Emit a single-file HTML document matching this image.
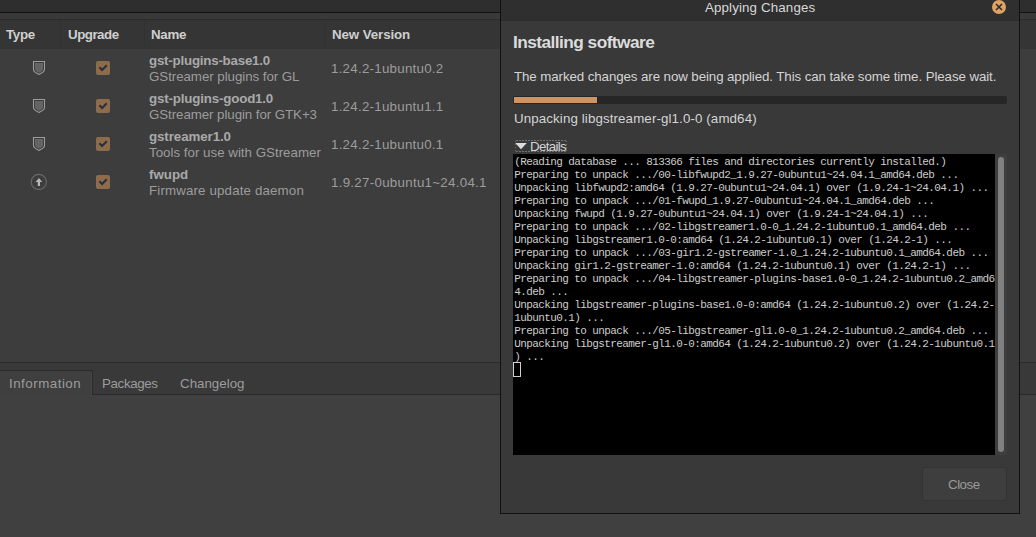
<!DOCTYPE html>
<html><head><meta charset="utf-8">
<style>
html,body{margin:0;padding:0;}
body{width:1036px;height:537px;overflow:hidden;position:relative;background:#404040;font-family:"Liberation Sans",sans-serif;font-size:13.33px;}
.a{position:absolute;}
.t{position:absolute;white-space:nowrap;line-height:1;}
.hd{font-weight:bold;color:#cfcfcf;}
.nm{font-weight:bold;color:#a9a9a9;}
.ds{color:#9c9c9c;}
.vr{color:#9c9c9c;}
.term{position:absolute;left:513px;top:154px;width:482px;height:301px;background:#000;}
.tl{position:absolute;left:1.3px;font-family:"Liberation Mono",monospace;font-size:11px;letter-spacing:-0.6px;color:#cdcdcd;white-space:pre;line-height:13px;}
</style></head><body>
<!-- main window bands -->
<div class="a" style="left:0;top:0;width:1036px;height:12px;background:#2e2e2e"></div>
<div class="a" style="left:0;top:12px;width:1036px;height:1px;background:#121212"></div>
<div class="a" style="left:0;top:13px;width:1036px;height:6px;background:#393939"></div>
<div class="a" style="left:0;top:19px;width:1036px;height:1px;background:#2b2b2b"></div>
<div class="a" style="left:0;top:20px;width:1036px;height:29px;background:#353535"></div>
<div class="a" style="left:60px;top:20px;width:1px;height:29px;background:#313131"></div>
<div class="a" style="left:144px;top:20px;width:1px;height:29px;background:#313131"></div>
<div class="a" style="left:325px;top:20px;width:1px;height:29px;background:#313131"></div>
<div class="a" style="left:0;top:49px;width:1036px;height:313px;background:#3d3d3d"></div>
<div class="a" style="left:0;top:362px;width:1036px;height:1px;background:#2a2a2a"></div>
<div class="a" style="left:0;top:363px;width:1036px;height:31px;background:#393939"></div>
<div class="a" style="left:0;top:394px;width:1036px;height:1px;background:#2a2a2a"></div>
<div class="a" style="left:0;top:395px;width:1036px;height:142px;background:#404040"></div>
<!-- selected tab -->
<div class="a" style="left:-1px;top:370px;width:94px;height:25px;background:#3f3f3f;border-top:1px solid #2a2a2a;border-right:1px solid #2a2a2a;border-top-right-radius:2px;box-sizing:border-box;box-shadow:inset -1px 0 0 #444"></div>

<!-- header -->
<div class="t hd" style="left:6px;top:28px;letter-spacing:-0.3px">Type</div>
<div class="t hd" style="left:68px;top:28px;letter-spacing:-0.5px">Upgrade</div>
<div class="t hd" style="left:151px;top:28px;letter-spacing:-0.3px">Name</div>
<div class="t hd" style="left:332px;top:28px;letter-spacing:-0.1px">New Version</div>

<!-- rows -->
<div class="t nm" style="left:149px;top:54px;letter-spacing:-0.22px">gst-plugins-base1.0</div>
<div class="t ds" style="left:149px;top:70px;letter-spacing:-0.06px">GStreamer plugins for GL</div>
<div class="t vr" style="left:331px;top:62px;letter-spacing:0.25px">1.24.2-1ubuntu0.2</div>

<div class="t nm" style="left:149px;top:92px;letter-spacing:-0.17px">gst-plugins-good1.0</div>
<div class="t ds" style="left:149px;top:108px;letter-spacing:-0.08px">GStreamer plugin for GTK+3</div>
<div class="t vr" style="left:331px;top:100px;letter-spacing:0.25px">1.24.2-1ubuntu1.1</div>

<div class="t nm" style="left:149px;top:130px;letter-spacing:-0.09px">gstreamer1.0</div>
<div class="t ds" style="left:149px;top:146px">Tools for use with GStreamer</div>
<div class="t vr" style="left:331px;top:138px;letter-spacing:0.25px">1.24.2-1ubuntu0.1</div>

<div class="t nm" style="left:149px;top:168px">fwupd</div>
<div class="t ds" style="left:149px;top:184px;letter-spacing:0.14px">Firmware update daemon</div>
<div class="t vr" style="left:331px;top:176px;letter-spacing:0.28px">1.9.27-0ubuntu1~24.04.1</div>


<!-- icons -->
<svg class="a" style="left:0;top:0" width="500" height="200" viewBox="0 0 500 200">
 <g id="shield"><path d="M33.5,61.5 H44.5 V69.5 C44.5,71.2 41.5,73.3 39,74.4 C36.5,73.3 33.5,71.2 33.5,69.5 Z" fill="#3d3d3d" stroke="#9c9c9c" stroke-width="1.1"/><path d="M35,63 H43 V69.2 C43,70.5 40.8,72 39,72.8 C37.2,72 35,70.5 35,69.2 Z" fill="#646464"/></g>
 <use href="#shield" y="38"/>
 <use href="#shield" y="76"/>
 <circle cx="38.8" cy="182" r="7.6" fill="none" stroke="#6a6a6a" stroke-width="1.1"/>
 <path d="M38.9,178 L42.2,182 L40,182 L40,186 L37.8,186 L37.8,182 L35.6,182 Z" fill="#b8b8b8"/>
 <g id="cb"><rect x="96" y="61" width="14" height="14" rx="2" fill="#8d6c4c"/>
 <path d="M99.4,67.3 L102.1,70 L106.8,65.2" fill="none" stroke="#2b2e3c" stroke-width="2"/></g>
 <use href="#cb" y="38"/>
 <use href="#cb" y="76"/>
 <use href="#cb" y="114"/>
</svg>

<!-- tabs -->
<div class="t ds" style="left:9px;top:377px;letter-spacing:0.5px">Information</div>
<div class="t ds" style="left:102px;top:377px;letter-spacing:-0.36px">Packages</div>
<div class="t ds" style="left:180px;top:377px">Changelog</div>

<!-- dialog -->
<div class="a" style="left:500px;top:0;width:520px;height:514px;background:#111"></div>
<div class="a" style="left:501px;top:0;width:518px;height:20px;background:#2f2f2f"></div>
<div class="a" style="left:501px;top:20px;width:518px;height:1px;background:#2c2c2c"></div>
<div class="a" style="left:501px;top:21px;width:518px;height:492px;background:#393939"></div>
<div class="t" style="left:705px;top:1px;color:#d8d8d8;letter-spacing:0.13px">Applying Changes</div>
<div class="a" style="left:992px;top:0px;width:14px;height:14px;border-radius:50%;background:#e0a262"></div>

<div class="t" style="left:513px;top:34px;color:#dcdcdc;font-weight:bold;font-size:17.3px;letter-spacing:-0.55px">Installing software</div>
<div class="t" style="left:514px;top:70px;color:#d4d4d4;letter-spacing:-0.1px">The marked changes are now being applied. This can take some time. Please wait.</div>
<div class="a" style="left:513px;top:96px;width:494px;height:8px;background:#262626;border-radius:2px"></div>
<div class="a" style="left:514px;top:97px;width:83px;height:6px;background:#cf9462;border-radius:0.5px"></div>
<div class="t" style="left:514px;top:112px;color:#d4d4d4;letter-spacing:0.11px">Unpacking libgstreamer-gl1.0-0 (amd64)</div>
<div class="t" style="left:530px;top:140px;color:#d4d4d4;letter-spacing:-0.67px">Details</div>

<div class="term">
<div class="tl" style="top:2px">(Reading database ... 813366 files and directories currently installed.)
Preparing to unpack .../00-libfwupd2_1.9.27-0ubuntu1~24.04.1_amd64.deb ...
Unpacking libfwupd2:amd64 (1.9.27-0ubuntu1~24.04.1) over (1.9.24-1~24.04.1) ...
Preparing to unpack .../01-fwupd_1.9.27-0ubuntu1~24.04.1_amd64.deb ...
Unpacking fwupd (1.9.27-0ubuntu1~24.04.1) over (1.9.24-1~24.04.1) ...
Preparing to unpack .../02-libgstreamer1.0-0_1.24.2-1ubuntu0.1_amd64.deb ...
Unpacking libgstreamer1.0-0:amd64 (1.24.2-1ubuntu0.1) over (1.24.2-1) ...
Preparing to unpack .../03-gir1.2-gstreamer-1.0_1.24.2-1ubuntu0.1_amd64.deb ...
Unpacking gir1.2-gstreamer-1.0:amd64 (1.24.2-1ubuntu0.1) over (1.24.2-1) ...
Preparing to unpack .../04-libgstreamer-plugins-base1.0-0_1.24.2-1ubuntu0.2_amd6
4.deb ...
Unpacking libgstreamer-plugins-base1.0-0:amd64 (1.24.2-1ubuntu0.2) over (1.24.2-
1ubuntu0.1) ...
Preparing to unpack .../05-libgstreamer-gl1.0-0_1.24.2-1ubuntu0.2_amd64.deb ...
Unpacking libgstreamer-gl1.0-0:amd64 (1.24.2-1ubuntu0.2) over (1.24.2-1ubuntu0.1
) ...</div>
</div>
<div class="a" style="left:995px;top:154px;width:12px;height:301px;background:#3e3e3e"></div>
<div class="a" style="left:998px;top:157px;width:6px;height:295px;background:#808080;border-radius:3px"></div>

<div class="a" style="left:922px;top:467px;width:85px;height:34px;background:#3e3e3e;border:1px solid #333333;box-sizing:border-box;border-radius:3px"></div>
<div class="t" style="left:948px;top:478px;color:#9a9a9a;letter-spacing:-0.5px">Close</div>
<svg class="a" style="left:500px;top:0" width="520" height="160" viewBox="500 0 520 160">
 <path d="M996,4 L1002,10 M1002,4 L996,10" stroke="#2b2b2b" stroke-width="1.6"/>
 <path d="M515.2,143 L526.8,143 L521,149.2 Z" fill="#dcdcdc"/>
 <path d="M516,140.5 H567 M516,151.5 H567" stroke="#707070" stroke-width="1" stroke-dasharray="2,1"/>
 <path d="M515.5,141 V152 M566.5,141 V152" stroke="#707070" stroke-width="1" stroke-dasharray="1,2"/>
</svg>
<div class="a" style="left:513px;top:362px;width:8px;height:15px;border:1px solid #d0d0d0;box-sizing:border-box"></div>
</body></html>
